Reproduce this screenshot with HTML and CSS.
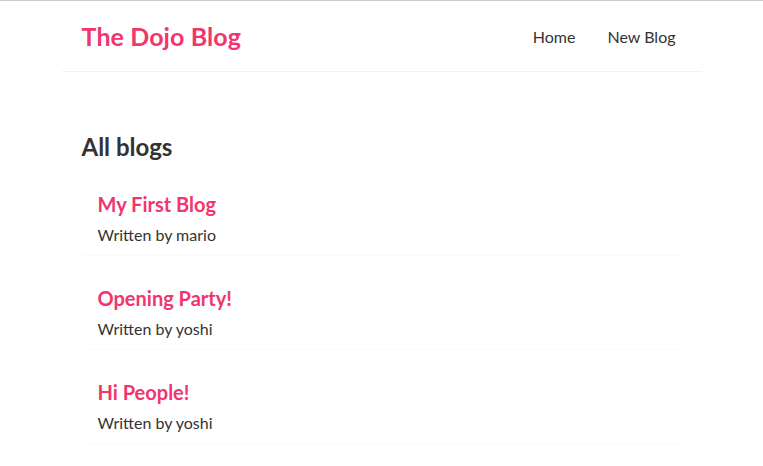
FILE: index.html
```html
<!DOCTYPE html>
<html lang="en">
<head>
<meta charset="utf-8">
<title>The Dojo Blog</title>
<link rel="stylesheet" href="styles.css">
</head>
<body>
<div class="app">
  <nav class="navbar">
    <h1 class="brand">The Dojo Blog</h1>
    <div class="links">
      <a href="#">Home</a>
      <a href="#">New Blog</a>
    </div>
  </nav>
  <main class="content">
    <h2 class="page-title">All blogs</h2>
    <div class="blog-preview">
      <h2>My First Blog</h2>
      <p>Written by mario</p>
    </div>
    <div class="blog-preview">
      <h2>Opening Party!</h2>
      <p>Written by yoshi</p>
    </div>
    <div class="blog-preview">
      <h2>Hi People!</h2>
      <p>Written by yoshi</p>
    </div>
  </main>
</div>
</body>
</html>
```
FILE: styles.css
```css
* {
  margin: 0;
  box-sizing: border-box;
  font-family: Lato, "Open Sans", sans-serif;
  color: #333;
}
html, body {
  background: #fff;
}
body {
  border-top: 1px solid #cccccc;
}
.navbar {
  padding: 20px;
  display: flex;
  align-items: center;
  max-width: 640px;
  height: 71px;
  margin: 0 auto;
  border-bottom: 1px solid #f2f2f2;
}
.brand {
  color: #f1356d;
  font-size: 25px;
  font-weight: 700;
  line-height: 30px;
  letter-spacing: 0.1px;
}
.links {
  margin-left: auto;
}
.links a {
  margin-left: 16px;
  text-decoration: none;
  padding: 6px;
  font-size: 16px;
}
.content {
  max-width: 640px;
  margin: 40px auto 0;
  padding: 20px 20px 0;
}
.page-title {
  font-size: 24px;
  font-weight: 700;
  line-height: 30px;
}
.blog-preview {
  padding: 10px 16px;
  margin: 20px 0;
  border-bottom: 1px solid #fafafa;
}
.blog-preview h2 {
  font-size: 20px;
  font-weight: 700;
  color: #f1356d;
  line-height: 25px;
  margin-bottom: 8px;
}
.blog-preview p {
  font-size: 16px;
  line-height: 20px;
}
```
